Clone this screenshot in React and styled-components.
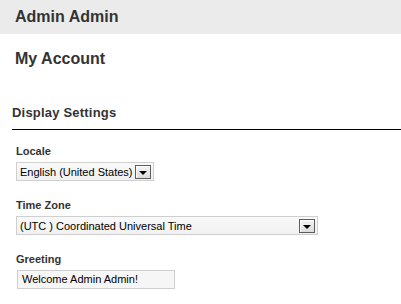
import React from "react";
import styled, { createGlobalStyle } from "styled-components";

const Global = createGlobalStyle`
  html, body { margin: 0; padding: 0; background: #fff; }
  body { font-family: "Liberation Sans", Arial, sans-serif; color: #333; }
`;

const Header = styled.div`
  height: 34px;
  background: #ebebeb;
  padding-left: 15px;
  font-size: 16px;
  font-weight: bold;
  line-height: 34px;
  color: #333;
`;

const PageTitle = styled.h1`
  margin: 16px 0 0 15px;
  font-size: 16px;
  line-height: 18px;
  font-weight: bold;
  color: #333;
`;

const SectionTitle = styled.h2`
  margin: 37px 0 0 12px;
  padding-bottom: 8px;
  border-bottom: 1px solid #000;
  font-size: 13px;
  line-height: 16px;
  font-weight: bold;
  letter-spacing: 0.2px;
  color: #333;
`;

const Form = styled.div`
  padding: 15px 0 0 16px;
  display: flex;
  flex-direction: column;
`;

const Field = styled.div`
  display: flex;
  flex-direction: column;
  align-items: flex-start;
  gap: 4px;
  margin-bottom: 18px;
`;

const Label = styled.label`
  font-size: 11px;
  line-height: 13px;
  font-weight: bold;
  color: #333;
`;

const SelectBox = styled.div`
  box-sizing: border-box;
  width: ${(p) => p.$width}px;
  height: 19px;
  border: 1px solid #cfcfcf;
  background: linear-gradient(#f9f9f9, #f1f1f1);
  display: flex;
  align-items: center;
  padding: 0 2px 0 3px;
  font-size: 11px;
  color: #000;
`;

const SelectText = styled.span`
  flex: 1;
  white-space: nowrap;
`;

const DropButton = styled.span`
  box-sizing: border-box;
  width: 16px;
  height: 14px;
  border: 1px solid #5c5c5c;
  box-shadow: inset 1px 1px 0 #fff;
  background: linear-gradient(#f4f4f4, #dcdcdc);
  display: flex;
  align-items: center;
  justify-content: center;
  &::after {
    content: "";
    width: 0;
    height: 0;
    margin-top: 2px;
    border-left: 4px solid transparent;
    border-right: 4px solid transparent;
    border-top: 4px solid #000;
  }
`;

const TextInput = styled.div`
  box-sizing: border-box;
  margin-left: 1px;
  width: 158px;
  height: 19px;
  border: 1px solid #cfcfcf;
  background: #f6f6f6;
  padding: 0 4px;
  font-size: 11px;
  line-height: 17px;
  color: #000;
`;

export default function App() {
  return (
    <>
      <Global />
      <Header>Admin Admin</Header>
      <PageTitle>My Account</PageTitle>
      <SectionTitle>Display Settings</SectionTitle>
      <Form>
        <Field>
          <Label>Locale</Label>
          <SelectBox $width={138}>
            <SelectText>English (United States)</SelectText>
            <DropButton />
          </SelectBox>
        </Field>
        <Field>
          <Label>Time Zone</Label>
          <SelectBox $width={302}>
            <SelectText>(UTC ) Coordinated Universal Time</SelectText>
            <DropButton />
          </SelectBox>
        </Field>
        <Field>
          <Label>Greeting</Label>
          <TextInput>Welcome Admin Admin!</TextInput>
        </Field>
      </Form>
    </>
  );
}
